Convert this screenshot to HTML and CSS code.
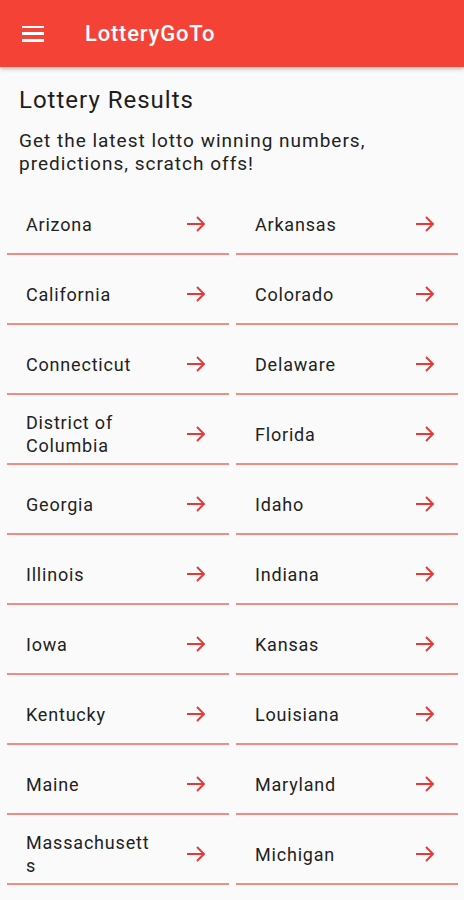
FILE: index.html
```html
<!DOCTYPE html>
<html lang="en">
<head>
    <meta charset="UTF-8">
    <meta name="viewport" content="width=device-width, initial-scale=1.0">
    <title>LotteryGoTo</title>
    <link rel="stylesheet" href="styles.css">
</head>
<body>

    <header class="appbar">
        <button class="menu" aria-label="Menu">
            <span></span><span></span><span></span>
        </button>
        <div class="appbar-title">LotteryGoTo</div>
    </header>

    <section class="intro">
        <h1>Lottery Results</h1>
        <p>Get the latest lotto winning numbers, predictions, scratch offs!</p>
    </section>

    <div class="states" id="states"></div>

    <script>
        const states = [
            'Arizona', 'Arkansas', 'California', 'Colorado',
            'Connecticut', 'Delaware', 'District of Columbia', 'Florida',
            'Georgia', 'Idaho', 'Illinois', 'Indiana',
            'Iowa', 'Kansas', 'Kentucky', 'Louisiana',
            'Maine', 'Maryland', 'Massachusetts', 'Michigan'
        ];

        const arrow = '<svg class="arrow" viewBox="0 0 24 24" width="24" height="24">' +
            '<path d="M3 12h17M13 5l7 7-7 7" fill="none" stroke="#e53935" stroke-width="1.9"/></svg>';

        const list = document.getElementById('states');
        states.forEach(name => {
            const a = document.createElement('a');
            a.className = 'state';
            a.href = '#';
            a.innerHTML = `<span class="state-name">${name}</span>${arrow}`;
            list.appendChild(a);
        });
    </script>

</body>
</html>
```

FILE: styles.css
```css
body {
    margin: 0;
    background-color: #fafafa;
    font-family: Roboto, 'Noto Sans', Arial, sans-serif;
    color: #212121;
}

.appbar {
    height: 67px;
    background-color: #f44336;
    display: flex;
    align-items: center;
    box-shadow: 0 2px 4px rgba(0, 0, 0, 0.25);
    position: relative;
}

.menu {
    width: 22px;
    height: 16px;
    margin-left: 22px;
    padding: 0;
    border: none;
    background: none;
    display: flex;
    flex-direction: column;
    justify-content: space-between;
}

.menu span {
    display: block;
    height: 2.5px;
    background-color: #fff;
}

.appbar-title {
    margin-left: 41px;
    color: #fff;
    font-size: 22px;
    font-weight: 500;
    letter-spacing: 0.8px;
}

.intro {
    padding: 0 19px;
}

.intro h1 {
    margin: 19px 0 0;
    font-size: 24px;
    line-height: 28px;
    font-weight: 400;
    letter-spacing: 1px;
    color: #1d1d1d;
}

.intro p {
    margin: 15px 0 0;
    font-size: 19px;
    line-height: 23px;
    letter-spacing: 1px;
    color: #222;
}

.states {
    display: grid;
    grid-template-columns: 1fr 1fr;
    column-gap: 7px;
    padding: 0 6px 0 7px;
    margin-top: 10px;
}

.state {
    height: 58px;
    display: flex;
    align-items: center;
    padding: 10px 21px 0 19px;
    border-bottom: 2px solid #f28b82;
    text-decoration: none;
    color: #222;
}

.state-name {
    width: 128px;
    font-size: 18px;
    line-height: 23px;
    letter-spacing: 0.8px;
    overflow-wrap: anywhere;
}

.arrow {
    margin-left: auto;
    flex-shrink: 0;
}
```
